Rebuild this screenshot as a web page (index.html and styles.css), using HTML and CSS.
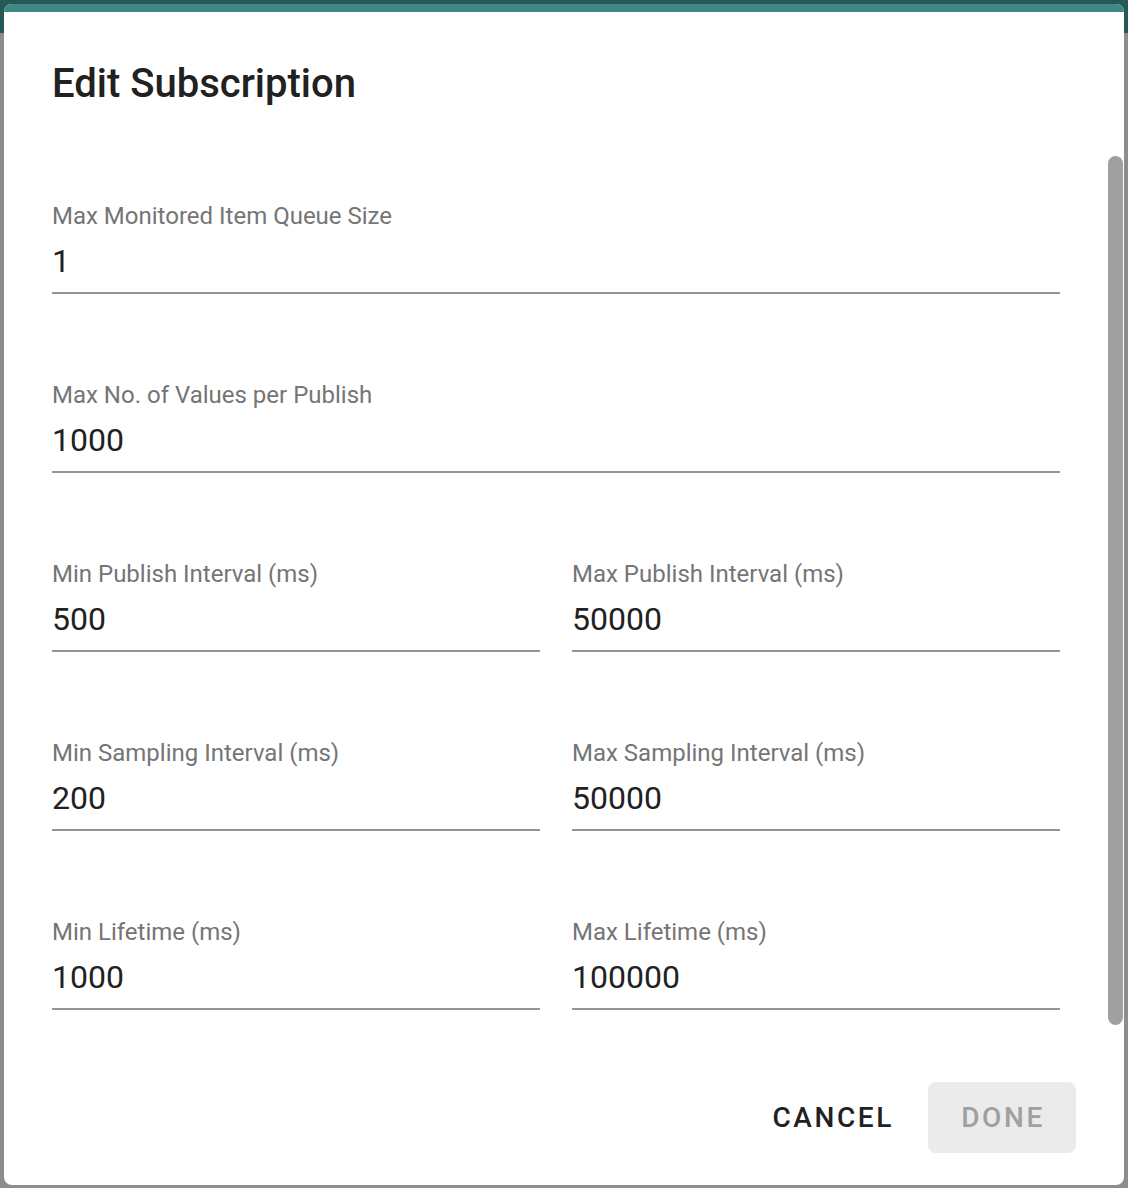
FILE: index.html
```html
<!DOCTYPE html>
<html lang="en">
<head>
<meta charset="utf-8">
<title>Edit Subscription</title>
<link rel="stylesheet" href="styles.css">
</head>
<body>
<div class="backdrop">
  <div class="dialog">
    <div class="dialog-strip"></div>
    <h2 class="dialog-title">Edit Subscription</h2>
    <div class="dialog-content">
      <div class="field">
        <div class="field-label">Max Monitored Item Queue Size</div>
        <div class="field-value">1</div>
      </div>
      <div class="field">
        <div class="field-label">Max No. of Values per Publish</div>
        <div class="field-value">1000</div>
      </div>
      <div class="field-row">
        <div class="field">
          <div class="field-label">Min Publish Interval (ms)</div>
          <div class="field-value">500</div>
        </div>
        <div class="field">
          <div class="field-label">Max Publish Interval (ms)</div>
          <div class="field-value">50000</div>
        </div>
      </div>
      <div class="field-row">
        <div class="field">
          <div class="field-label">Min Sampling Interval (ms)</div>
          <div class="field-value">200</div>
        </div>
        <div class="field">
          <div class="field-label">Max Sampling Interval (ms)</div>
          <div class="field-value">50000</div>
        </div>
      </div>
      <div class="field-row">
        <div class="field">
          <div class="field-label">Min Lifetime (ms)</div>
          <div class="field-value">1000</div>
        </div>
        <div class="field">
          <div class="field-label">Max Lifetime (ms)</div>
          <div class="field-value">100000</div>
        </div>
      </div>
    </div>
    <div class="dialog-actions">
      <button class="btn btn-text">Cancel</button>
      <button class="btn btn-disabled">Done</button>
    </div>
    <div class="scroll-thumb"></div>
  </div>
</div>
</body>
</html>
```

FILE: styles.css
```css
html, body {
  margin: 0;
  padding: 0;
}

body {
  font-family: Roboto, "Liberation Sans", Arial, sans-serif;
  background: #8d8d8d;
  width: 1128px;
  height: 1188px;
  overflow: hidden;
}

.backdrop {
  height: 1188px;
  background: linear-gradient(#265956 0, #265956 33px, #8d8d8d 33px, #8d8d8d 100%);
  padding-top: 4px;
  box-sizing: border-box;
}

.dialog {
  position: relative;
  margin-left: 4px;
  width: 1120px;
  height: 1181px;
  background: #ffffff;
  border-radius: 8px;
  overflow: hidden;
  display: flex;
  flex-direction: column;
}

.dialog-strip {
  height: 8px;
  background: #3e8985;
  flex: none;
}

.dialog-title {
  margin: 48px 0 0 48px;
  font-size: 40px;
  line-height: 48px;
  font-weight: 500;
  color: #212121;
}

.dialog-content {
  margin-top: 94px;
  padding: 0 64px 0 48px;
  display: flex;
  flex-direction: column;
  gap: 87px;
}

.field-row {
  display: grid;
  grid-template-columns: 1fr 1fr;
  column-gap: 32px;
}

.field {
  display: flex;
  flex-direction: column;
  border-bottom: 2px solid #949494;
  padding-bottom: 11px;
}

.field-label {
  font-size: 24px;
  line-height: 28px;
  color: #757575;
}

.field-value {
  margin-top: 11px;
  font-size: 32px;
  line-height: 40px;
  color: #212121;
}

.dialog-actions {
  margin-top: auto;
  padding: 0 48px 32px 0;
  display: flex;
  justify-content: flex-end;
  gap: 4px;
}

.btn {
  font-family: Roboto, "Liberation Sans", Arial, sans-serif;
  font-size: 28px;
  font-weight: 500;
  letter-spacing: 2.6px;
  text-transform: uppercase;
  height: 71px;
  padding: 0 30px 0 32px;
  border: none;
  border-radius: 8px;
  background: transparent;
}

.btn-text {
  color: #212121;
}

.btn-disabled {
  width: 148px;
  background: #ebebeb;
  color: #a0a0a0;
}

.scroll-thumb {
  position: absolute;
  left: 1104px;
  top: 152px;
  width: 15px;
  height: 869px;
  border-radius: 8px;
  background: #a0a0a0;
}
```
